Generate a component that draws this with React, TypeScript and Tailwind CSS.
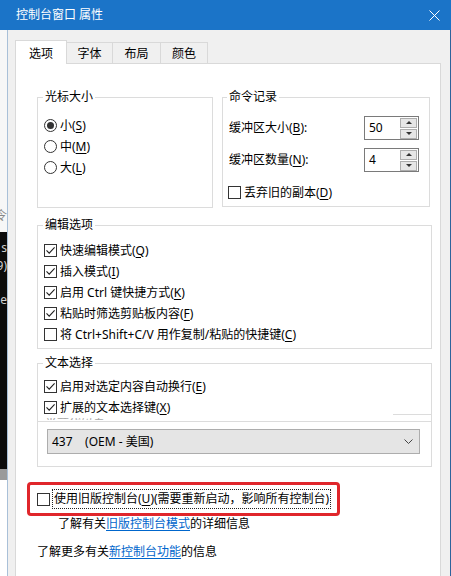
import type { ReactNode } from 'react'

// Win10 控制台属性对话框 (选项 tab)

const Mn = ({ c }: { c: string }) => <u className="underline-offset-[2px]">{c}</u>

function Check({ on }: { on?: boolean }) {
  return (
    <span className="flex h-[13px] w-[13px] shrink-0 items-center justify-center border border-[#333] bg-white">
      {on && (
        <svg width="11" height="11" viewBox="0 0 11 11">
          <path d="M1.5 5.3 L4.2 8.1 L9.6 2.4" stroke="#1e1e1e" strokeWidth="1.1" fill="none" />
        </svg>
      )}
    </span>
  )
}

function Radio({ on }: { on?: boolean }) {
  return (
    <span className="flex h-[13px] w-[13px] shrink-0 items-center justify-center rounded-full border border-[#333] bg-white">
      {on && <span className="h-[7px] w-[7px] rounded-full bg-[#333]" />}
    </span>
  )
}

function Row({ box, children }: { box: ReactNode; children: ReactNode }) {
  return (
    <div className="flex h-[21px] items-center gap-[3px] whitespace-nowrap">
      {box}
      <span>{children}</span>
    </div>
  )
}

function Group({ label, className, labelLeft, children }: { label: string; className: string; labelLeft?: string; children: ReactNode }) {
  return (
    <div className={`relative border border-[#dcdcdc] ${className}`}>
      <span className={`absolute -top-[9px] bg-white px-[2px] leading-[16px] ${labelLeft ?? 'left-[5px]'}`}>{label}</span>
      {children}
    </div>
  )
}

function Spin({ value }: { value: string }) {
  return (
    <div className="flex h-[24px] w-[55px] items-center border border-[#7a7a7a] bg-white">
      <span className="pl-[4px]">{value}</span>
      <div className="ml-auto flex flex-col gap-[1px] p-[1px]">
        <div className="flex h-[10px] w-[17px] items-center justify-center border border-[#adadad] bg-[#e6e6e6]">
          <svg width="6" height="3" viewBox="0 0 6 3"><path d="M0 3 L3 0 L6 3 Z" fill="#333" /></svg>
        </div>
        <div className="flex h-[10px] w-[17px] items-center justify-center border border-[#adadad] bg-[#e6e6e6]">
          <svg width="6" height="3" viewBox="0 0 6 3"><path d="M0 0 L6 0 L3 3 Z" fill="#333" /></svg>
        </div>
      </div>
    </div>
  )
}

export default function App() {
  return (
    <div className="h-[576px] w-[451px] overflow-hidden bg-white font-['Noto_Sans','Noto_Sans_CJK_SC',sans-serif] text-[12px] leading-[16px] text-black">
      {/* title bar */}
      <div className="flex h-[30px] items-center bg-[#1b74c8] pl-[16px] text-white">
        <span>控制台窗口 属性</span>
        <svg className="ml-auto mr-[11px]" width="11" height="11" viewBox="0 0 11 11">
          <path d="M0.5 0.5 L10.5 10.5 M10.5 0.5 L0.5 10.5" stroke="#fff" strokeWidth="1" />
        </svg>
      </div>

      <div className="flex h-[546px]">
        {/* console window behind */}
        <div className="flex w-[7px] flex-col overflow-hidden">
          <div className="flex h-[202px] flex-col justify-end bg-[#f7f7f7] pb-[8px]">
            <div className="flex justify-end overflow-hidden text-[#888]">令</div>
          </div>
          <div className="flex h-[237px] flex-col bg-[#0c0c0c] pt-[8px] text-[#d0d0d0]">
            <div className="flex justify-end overflow-hidden">s</div>
            <div className="flex justify-end overflow-hidden pt-[2px]">9)</div>
            <div className="mt-[18px] flex justify-end overflow-hidden">e</div>
          </div>
          <div className="h-[11px] bg-[#9a9a9a]" />
          <div className="flex-1 bg-white" />
        </div>

        {/* dialog body */}
        <div className="flex-1 border-l border-r border-l-[#a9c0d8] border-r-[#2d639c] bg-[#f0f0f0] pl-[7px] pr-[9px] pt-[10px]">
          {/* tabs */}
          <div className="relative z-10 -mb-px flex h-[24px]">
            <div className="flex h-[24px] w-[52px] items-center justify-center border border-b-0 border-[#d9d9d9] bg-white pt-[2px]">选项</div>
            <div className="mt-[2px] flex h-[21px] w-[46px] items-center justify-center border border-b-0 border-l-0 border-[#d9d9d9] pt-[2px]">字体</div>
            <div className="mt-[2px] flex h-[21px] w-[48px] items-center justify-center border border-b-0 border-l-0 border-[#d9d9d9] pt-[2px]">布局</div>
            <div className="mt-[2px] flex h-[21px] w-[47px] items-center justify-center border border-b-0 border-l-0 border-[#d9d9d9] pt-[2px]">颜色</div>
          </div>

          {/* tab panel */}
          <div className="h-[520px] border border-[#d9d9d9] bg-white pl-[21px] pr-[8px]">
            <div className="mt-[33px] flex">
              <Group label="光标大小" className="h-[111px] w-[176px] pl-[6px] pt-[17px]">
                <Row box={<Radio on />}>小(<Mn c="S" />)</Row>
                <Row box={<Radio />}>中(<Mn c="M" />)</Row>
                <Row box={<Radio />}>大(<Mn c="L" />)</Row>
              </Group>
              <Group label="命令记录" labelLeft="left-[4px]" className="ml-[9px] h-[110px] w-[208px] pl-[6px] pr-[10px] pt-[18px]">
                <div className="flex h-[24px] items-center justify-between">
                  <span>缓冲区大小(<Mn c="B" />):</span>
                  <Spin value="50" />
                </div>
                <div className="mt-[8px] flex h-[24px] items-center justify-between">
                  <span>缓冲区数量(<Mn c="N" />):</span>
                  <Spin value="4" />
                </div>
                <div className="-ml-px mt-[10px]">
                  <Row box={<Check />}>丢弃旧的副本(<Mn c="D" />)</Row>
                </div>
              </Group>
            </div>

            <Group label="编辑选项" className="mt-[17px] h-[124px] w-[395px] pl-[6px] pt-[14px]">
              <Row box={<Check on />}>快速编辑模式(<Mn c="Q" />)</Row>
              <Row box={<Check on />}>插入模式(<Mn c="I" />)</Row>
              <Row box={<Check on />}>启用 Ctrl 键快捷方式(<Mn c="K" />)</Row>
              <Row box={<Check on />}>粘贴时筛选剪贴板内容(<Mn c="F" />)</Row>
              <Row box={<Check />}>将 Ctrl+Shift+C/V 用作复制/粘贴的快捷键(<Mn c="C" />)</Row>
            </Group>

            <Group label="文本选择" className="mt-[14px] w-[395px] pt-[12px]">
              <div className="pl-[6px]">
                <Row box={<Check on />}>启用对选定内容自动换行(<Mn c="E" />)</Row>
                <div className="-mb-[4px]">
                  <Row box={<Check on />}>扩展的文本选择键(<Mn c="X" />)</Row>
                </div>
              </div>
              <div className="flex justify-end">
                <div className="w-[38px] border-t border-[#dcdcdc]" />
              </div>
              <div className="ml-[7px] h-[6px] pt-[3px] text-[#a8a8a8]">
                <div className="h-[2px] overflow-hidden">
                  <div className="-mt-[3px]">当前代码页</div>
                </div>
              </div>
              <div className="border-t border-[#dcdcdc] pb-[12px] pl-[9px] pr-[11px] pt-[7px]">
                <div className="flex h-[25px] items-center whitespace-pre border border-[#adadad] bg-[#e5e5e5] pl-[4px] pr-[6px]">
                  <span>437    (OEM - 美国)</span>
                  <svg className="ml-auto" width="9" height="5" viewBox="0 0 9 5">
                    <path d="M0.5 0.5 L4.5 4.5 L8.5 0.5" stroke="#444" strokeWidth="1" fill="none" />
                  </svg>
                </div>
              </div>
            </Group>

            <div className="-ml-[10px] mt-[15px] flex h-[34px] w-[313px] items-center rounded-[4px] border-[3px] border-[#e0262b] pl-[7px]">
              <Check />
              <div className="ml-[2px] flex h-[20px] items-center whitespace-nowrap border border-dotted border-[#222] px-[1px]">
                使用旧版控制台(<Mn c="U" />)(需要重新启动，影响所有控制台)
              </div>
            </div>

            <div className="ml-[21px] whitespace-nowrap">
              了解有关<span className="text-[#0066cc] underline underline-offset-[2px]">旧版控制台模式</span>的详细信息
            </div>
            <div className="mt-[12px] whitespace-nowrap">
              了解更多有关<span className="text-[#0066cc] underline underline-offset-[2px]">新控制台功能</span>的信息
            </div>
          </div>
        </div>
      </div>
    </div>
  )
}
